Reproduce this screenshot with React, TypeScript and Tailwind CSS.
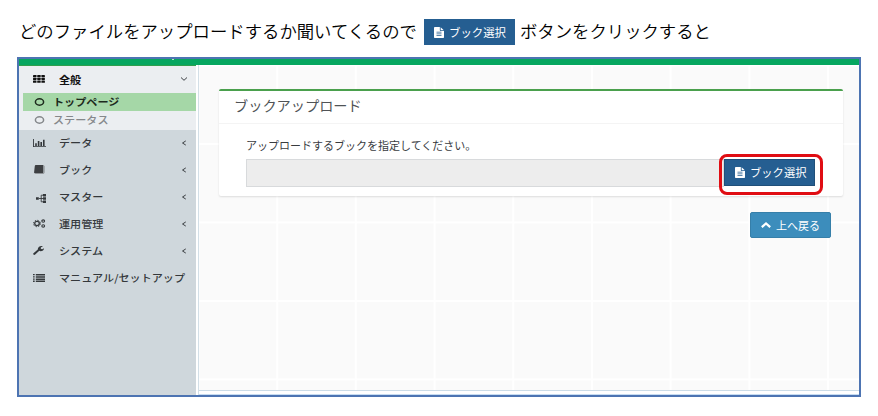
import React from "react";

function FileIcon({ className }: { className: string }) {
  return (
    <svg viewBox="0 0 12 14" preserveAspectRatio="none" className={className} fill="currentColor" aria-hidden="true">
      <path
        fillRule="evenodd"
        d="M1 0h6v4.2c0 .5.3.8.8.8H12v8.2c0 .5-.3.8-.8.8H.8c-.5 0-.8-.3-.8-.8V.8C0 .3.4 0 1 0zM8 0.2 11.8 4H8zM3 6v1h6V6zm0 2.200v1h6v-1zm0 2.200v1h6v-1z"
      />
    </svg>
  );
}

function GridIcon() {
  return (
    <svg viewBox="0 0 12 8" className="h-[8px] w-[12px]" fill="#111" aria-hidden="true">
      {[0, 2.8, 5.6].map((y) =>
        [0, 4.2, 8.4].map((x) => <rect key={`${x}-${y}`} x={x} y={y} width="3.5" height="2.2" rx="0.4" />)
      )}
    </svg>
  );
}

function ChartIcon() {
  return (
    <svg viewBox="0 0 13 8" className="h-[8px] w-[13px]" fill="currentColor" aria-hidden="true">
      <path d="M0 0h.9v7.2H13V8H0zM2.2 4.2h1.6v2.8H2.2zM4.8 2h1.6v5H4.8zM7.4 3h1.6v4H7.4zM10 .8h1.6V7H10z" />
    </svg>
  );
}

function BookIcon() {
  return (
    <svg viewBox="0 0 11 9" className="ml-px h-[9px] w-[11px]" aria-hidden="true">
      <path d="M1.8 0h7.6v7.3c0 .6-.4 1-1 1H1.200C.4 8.300 0 7.900.1 7.200L.8.9C.9.3 1.200 0 1.800 0z" fill="#3d3f42" />
      <path d="M10.200.8v6.800c0 .6-.4 1-1 1H1.200" stroke="#85898d" strokeWidth=".8" fill="none" />
    </svg>
  );
}

function TreeIcon() {
  return (
    <svg viewBox="0 0 11 9" className="mt-[3px] ml-[3px] h-[9px] w-[11px]" fill="currentColor" aria-hidden="true">
      <path d="M0 3.200h2.800v2.600H0zM7 0h3v2.400H7zM7 3.300h3v2.400H7zM7 6.600h3V9H7z" />
      <path d="M3 4.500h4M5.200 1.200v6.600M5.200 1.200H7M5.200 7.800H7" stroke="currentColor" strokeWidth=".9" fill="none" />
    </svg>
  );
}

function GearsIcon() {
  return (
    <svg viewBox="0 0 13 9" className="h-[9px] w-[13px]" fill="none" stroke="currentColor" aria-hidden="true">
      <ellipse cx="4" cy="4.500" rx="2.300" ry="2.100" strokeWidth="1.300" />
      <ellipse cx="4" cy="4.500" rx="3.500" ry="3.200" strokeWidth="1" strokeDasharray="1.300 1.330" />
      <ellipse cx="10.200" cy="2.100" rx="1.400" ry="1.200" strokeWidth="1.100" />
      <ellipse cx="10.200" cy="6.900" rx="1.400" ry="1.200" strokeWidth="1.100" />
    </svg>
  );
}

function WrenchIcon() {
  return (
    <svg viewBox="0 0 11 9" className="h-[9px] w-[11px]" fill="currentColor" aria-hidden="true">
      <path d="M6.300 4.800 2.200 8.500c-.5.5-1.200.5-1.700.1-.5-.4-.5-1 0-1.400L4.800 3.600C4.700 1.500 6.300 0 8.600 0c.5 0 .9.1 1.300.3L7.800 1.500v1.200l1.300.6L11 2.200C11 4 9.500 5.200 7.600 5.200c-.5 0-.9-.1-1.300-.4z" />
    </svg>
  );
}

function ListIcon() {
  return (
    <svg viewBox="0 0 12 8" className="h-[8px] w-[12px]" fill="currentColor" aria-hidden="true">
      <path d="M0 0h1.700v1.300H0zM0 2.200h1.700v1.300H0zM0 4.400h1.700v1.300H0zM0 6.600h1.700v1.300H0zM2.800 0H12v1.500H2.800zM2.800 2.200H12v1.500H2.800zM2.800 4.400H12v1.500H2.800zM2.800 6.500H12V8H2.800z" />
    </svg>
  );
}

function Ring() {
  return (
    <svg viewBox="0 0 11 8" className="mr-[8px] h-[8px] w-[11px]" fill="none" aria-hidden="true">
      <ellipse cx="5.500" cy="4" rx="4.100" ry="3.200" stroke="currentColor" strokeWidth="1.500" />
    </svg>
  );
}

function Chevron({ down = false }: { down?: boolean }) {
  return (
    <svg viewBox="0 0 8 6" className="h-[6px] w-[8px]" fill="none" stroke="#3d4145" strokeWidth="1" aria-hidden="true">
      <path d={down ? "M1 1.500 4 4.300 7 1.500" : "M5.800.9 2.500 3 5.800 5.100"} />
    </svg>
  );
}

const menu: { label: string; icon: React.ReactNode; arrow: boolean }[] = [
  { label: "データ", icon: <ChartIcon />, arrow: true },
  { label: "ブック", icon: <BookIcon />, arrow: true },
  { label: "マスター", icon: <TreeIcon />, arrow: true },
  { label: "運用管理", icon: <GearsIcon />, arrow: true },
  { label: "システム", icon: <WrenchIcon />, arrow: true },
  { label: "マニュアル/セットアップ", icon: <ListIcon />, arrow: false },
];

export default function App() {
  return (
    <div className="h-[416px] w-[878px] overflow-hidden bg-white pl-[17px] font-['Noto_Sans_CJK_JP',sans-serif] whitespace-nowrap">
      <header className="flex h-[57px] items-start pt-[19px] pl-[2px] text-[17.380px] leading-[24px] text-black">
        <span className="w-[405px] font-[350]">どのファイルをアップロードするか聞いてくるので</span>
        <span className="flex h-[26px] w-[91px] items-center bg-[#255e91] pl-[10px] text-[11.400px] text-white">
          <FileIcon className="mr-[5px] h-[11px] w-[10px]" />
          ブック選択
        </span>
        <span className="ml-[5px] font-[350]">ボタンをクリックすると</span>
      </header>

      <main className="flex h-[340px] w-[844px] flex-col border-2 border-[#4d74b2]">
        <div className="h-[6px] shrink-0 bg-[#06a65f]">
          <div className="ml-[153px] h-px w-[2px] bg-[#b5e2cc]" />
        </div>
        <div className="flex min-h-0 flex-1">
          <nav className="w-[177px] shrink-0 border-t border-[#2f9e4c] bg-[#cfd7dc] text-[11.100px] font-medium text-[#34383b]">
            <div className="h-[64px] bg-[#ebeef1]">
              <div className="flex h-[27px] items-center pb-[1px] pl-[14px] text-[#111]">
                <GridIcon />
                <span className="ml-[14px] flex-1 scale-y-90 font-bold">全般</span>
                <span className="mr-[8px]"><Chevron down /></span>
              </div>
              <div className="ml-[4px] flex h-[18px] items-center bg-[#a5d7a7] pb-[1px] pl-[11px] text-[#1d2b1d]">
                <Ring />
                <span className="scale-y-90 font-bold">トップページ</span>
              </div>
              <div className="ml-[4px] flex h-[19px] items-center pb-[2px] pl-[11px] text-[#85888b]">
                <Ring />
                <span className="scale-y-90">ステータス</span>
              </div>
            </div>
            {menu.map(({ label, icon, arrow }) => (
              <div key={label} className="flex h-[27px] items-center pb-[2px] pl-[14px]">
                <span className="flex w-[26px] items-center">{icon}</span>
                <span className="flex-1 scale-y-90">{label}</span>
                {arrow && <span className="mr-[8px]"><Chevron /></span>}
              </div>
            ))}
          </nav>
          <div className="w-[3px] shrink-0 border-r border-[#d3dfe7] bg-white" />

          <div className="flex min-w-0 flex-1 flex-col">
            <section className="h-[326px] border-b border-[#ccdce7] bg-[#fafafa] bg-[linear-gradient(to_right,#fff_2px,transparent_2px),linear-gradient(to_bottom,#fff_2px,transparent_2px)] bg-size-[78.700px_78.500px] bg-position-[-1.500px_-0.500px] pt-[24px] pl-[20px]">
              <div className="h-[107px] w-[624px] rounded-[2px] border-t-2 border-[#4aa04d] bg-white shadow-[0_1px_2px_rgba(0,0,0,0.12)]">
                <h1 className="h-[33px] border-b border-[#f4f4f4] pl-[15px] text-[14.200px] leading-[29px] text-[#505356]">
                  ブックアップロード
                </h1>
                <div className="pt-[12px] pl-[27px]">
                  <p className="h-[23px] text-[11px] leading-[19px] text-[#393c3f]">
                    アップロードするブックを指定してください。
                  </p>
                  <div className="flex h-[28px] items-start">
                    <div className="h-[28px] w-[478px] border border-[#d8dadc] bg-[#ededed]" />
                    <div className="relative">
                      <button className="flex h-[27px] w-[91px] items-center border border-[#204f79] bg-[#255e91] pl-[10px] text-[11.300px] text-white">
                        <FileIcon className="mr-[5px] h-[11px] w-[10px]" />
                        ブック選択
                      </button>
                      <div className="absolute -top-[5px] -left-[5px] h-[41px] w-[104px] rounded-[8px] border-[3px] border-[#e00d13]" />
                    </div>
                  </div>
                </div>
              </div>
              <button className="mt-[16px] ml-[531px] flex h-[26px] w-[81px] items-center rounded-[2px] border border-[#367fa9] bg-[#3c8dbc] pl-[10px] text-[11px] text-white">
                <svg viewBox="0 0 10 6" className="mr-[5px] h-[6px] w-[10px]" fill="none" stroke="currentColor" strokeWidth="2.200" aria-hidden="true">
                  <path d="M.8 5.200 5 1.500 9.200 5.200" />
                </svg>
                上へ戻る
              </button>
            </section>
            <div className="flex-1 border-b border-[#c6dcf2] bg-white" />
          </div>
        </div>
      </main>
    </div>
  );
}
